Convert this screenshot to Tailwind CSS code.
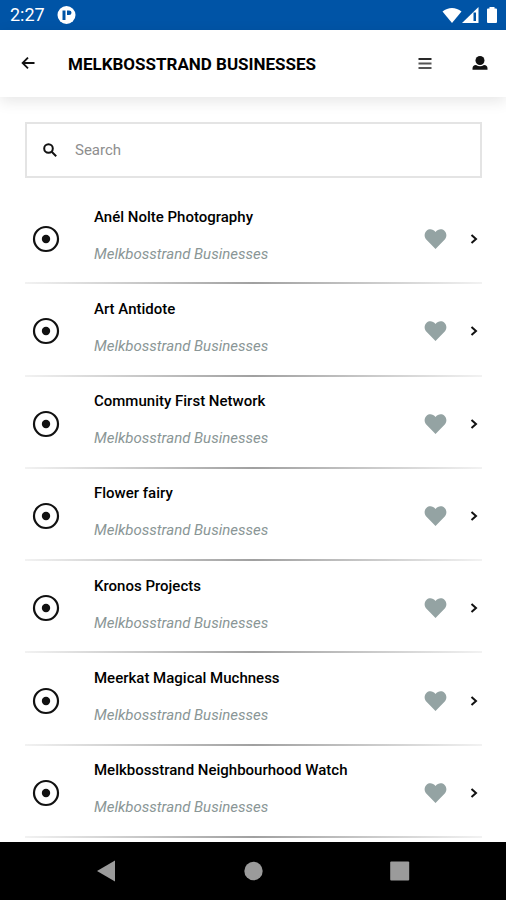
<!DOCTYPE html>
<html lang="en">
<head>
  <meta charset="UTF-8">
  <meta name="viewport" content="width=device-width, initial-scale=1.0">
  <title>Melkbosstrand Businesses</title>
  <script src="https://cdn.jsdelivr.net/npm/@tailwindcss/browser@4"></script>
  <style>
    body { font-family: Roboto, 'Liberation Sans', sans-serif; }
  </style>
</head>
<body class="bg-white text-black flex flex-col min-h-screen">

  <!-- Status bar -->
  <div class="h-[30px] shrink-0 bg-[#0054a6] text-white flex items-center justify-between pl-[10px] pr-2">
    <div class="flex items-center gap-3">
      <span class="text-[18px] leading-6">2:27</span>
      <svg class="size-5" viewBox="0 0 20 20">
        <circle cx="9.500" cy="10" r="9" fill="#fff"/>
        <path d="M5.500 5.500h3V15h-3z" fill="#0054a6"/>
        <path d="M10 5.500h2q2.500 0 2.500 2.200t-2.500 2.300h-2z" fill="#0054a6"/>
      </svg>
    </div>
    <div class="flex items-center">
      <svg class="w-5 h-[18px]" viewBox="0 0 20 18" fill="#fff">
        <path d="M.5 5.500C6 .8 14 .8 19.500 5.500L10 17z"/>
      </svg>
      <svg class="w-[18px] h-[18px]" viewBox="0 0 18 18">
        <path d="M0 17L16.500 1V17z" fill="#fff"/>
        <path d="M11.500 6.500h2.500V15h-2.500z" fill="#0054a6"/>
      </svg>
      <svg class="w-[12px] h-[18px] ml-[6px]" viewBox="0 0 12 18" fill="#fff">
        <path d="M3.500 1h5v1.500H10q1 0 1 1V16q0 1-1 1H2q-1 0-1-1V3.500q0-1 1-1h1.500z"/>
      </svg>
    </div>
  </div>

  <header class="h-[67px] shrink-0 bg-white flex items-center pl-[21px] pr-[18px] shadow-[0_4px_14px_rgba(0,0,0,0.1)]">
    <button type="button" aria-label="Back">
      <svg class="size-[14px] block" viewBox="0 0 14 14" fill="none" stroke="#111" stroke-width="1.800">
        <path d="M13.500 6H1.800M7 .6L1.600 6L7 11.400"/>
      </svg>
    </button>
    <h1 class="grow ml-[33px] text-[17px] leading-6 font-bold">MELKBOSSTRAND BUSINESSES</h1>
    <button type="button" aria-label="Menu">
      <svg class="w-[14px] h-3 block" viewBox="0 0 14 12" fill="none" stroke-width="1.800">
        <path d="M.5 1h13" stroke="#111"/>
        <path d="M.5 5.500h13M.5 10h13" stroke="#555"/>
      </svg>
    </button>
    <button type="button" aria-label="Account" class="ml-10">
      <svg class="w-4 h-[15px] block" viewBox="0 0 16 15" fill="#111">
        <circle cx="8" cy="4.500" r="4.500"/>
        <path d="M4 9Q8 11.500 12 9Q15.500 9.300 15.500 12.500V13.800H.5V12.500Q.5 9.300 4 9z"/>
      </svg>
    </button>
  </header>

  <main class="grow flex flex-col pl-[25px] pr-6 pt-[25px] pb-1">
    <div class="h-14 shrink-0 flex items-center border-2 border-[#e4e4e4] pl-4">
      <label for="search" aria-label="Search">
        <svg class="size-[14px] block" viewBox="0 0 14 14" fill="none" stroke="#111" stroke-width="2">
          <circle cx="5.500" cy="5.500" r="4.300"/>
          <path d="M8.700 8.700L13.200 13.200"/>
        </svg>
      </label>
      <input type="text" id="search" placeholder="Search" class="grow h-full ml-[18px] text-[15px] placeholder-[#8e8e8e] focus:outline-none">
    </div>

    <ul id="businessList" class="grow mt-[14px] grid auto-rows-fr"></ul>
  </main>

  <!-- Device navigation -->
  <nav class="h-[58px] shrink-0 bg-black flex items-center justify-between px-24">
    <button type="button" aria-label="Back">
      <svg class="w-[20px] h-[22px] block" viewBox="0 0 20 22" fill="#9b9b9b"><path d="M1 11L19 .5V21.500z"/></svg>
    </button>
    <button type="button" aria-label="Home">
      <svg class="size-5 block" viewBox="0 0 20 20" fill="#9b9b9b"><circle cx="10.500" cy="10" r="9.200"/></svg>
    </button>
    <button type="button" aria-label="Recent apps">
      <svg class="size-5 block" viewBox="0 0 20 20" fill="#9b9b9b"><rect x=".2" y=".5" width="19" height="19" rx="1"/></svg>
    </button>
  </nav>

  <script>
    const businesses = [
      'Anél Nolte Photography',
      'Art Antidote',
      'Community First Network',
      'Flower fairy',
      'Kronos Projects',
      'Meerkat Magical Muchness',
      'Melkbosstrand Neighbourhood Watch',
    ];

    const businessList = document.getElementById('businessList');

    businessList.innerHTML = businesses.map(name => `
      <li class="flex flex-col">
        <div class="grow flex items-center pl-[7px] pt-1">
          <svg class="size-7 shrink-0" viewBox="0 0 28 28">
            <circle cx="14" cy="14" r="12" fill="none" stroke="#111" stroke-width="2.200"/>
            <circle cx="14" cy="14" r="4.200" fill="#111"/>
          </svg>
          <a href="#" class="grow ml-[34px] mb-2">
            <span class="block text-[15px] leading-5 font-medium">${name}</span>
            <span class="block mt-[17px] text-[15px] leading-5 italic text-[#8a9696]">Melkbosstrand Businesses</span>
          </a>
          <button type="button" aria-label="Favourite ${name}">
            <svg class="w-6 h-[22px] block" viewBox="0 0 24 22" fill="#94a3a3">
              <path d="M11.500 21L2 11.200C-.2 8.500.4 4.500 2.600 2.700C5.100.6 9 .8 11.500 4C14 .8 17.900.6 20.400 2.700C22.600 4.500 23.200 8.500 21 11.200z"/>
            </svg>
          </button>
          <button type="button" aria-label="Open ${name}" class="ml-[22px] mr-1">
            <svg class="w-2 h-[10px] block" viewBox="0 0 8 10" fill="none" stroke="#111" stroke-width="2">
              <path d="M1.500 1L6 5L1.500 9"/>
            </svg>
          </button>
        </div>
        <div class="h-[2px] bg-linear-to-r from-[#f2f2f2] via-[#a0a0a0] to-[#f2f2f2]"></div>
      </li>
    `).join('');
  </script>
</body>
</html>
